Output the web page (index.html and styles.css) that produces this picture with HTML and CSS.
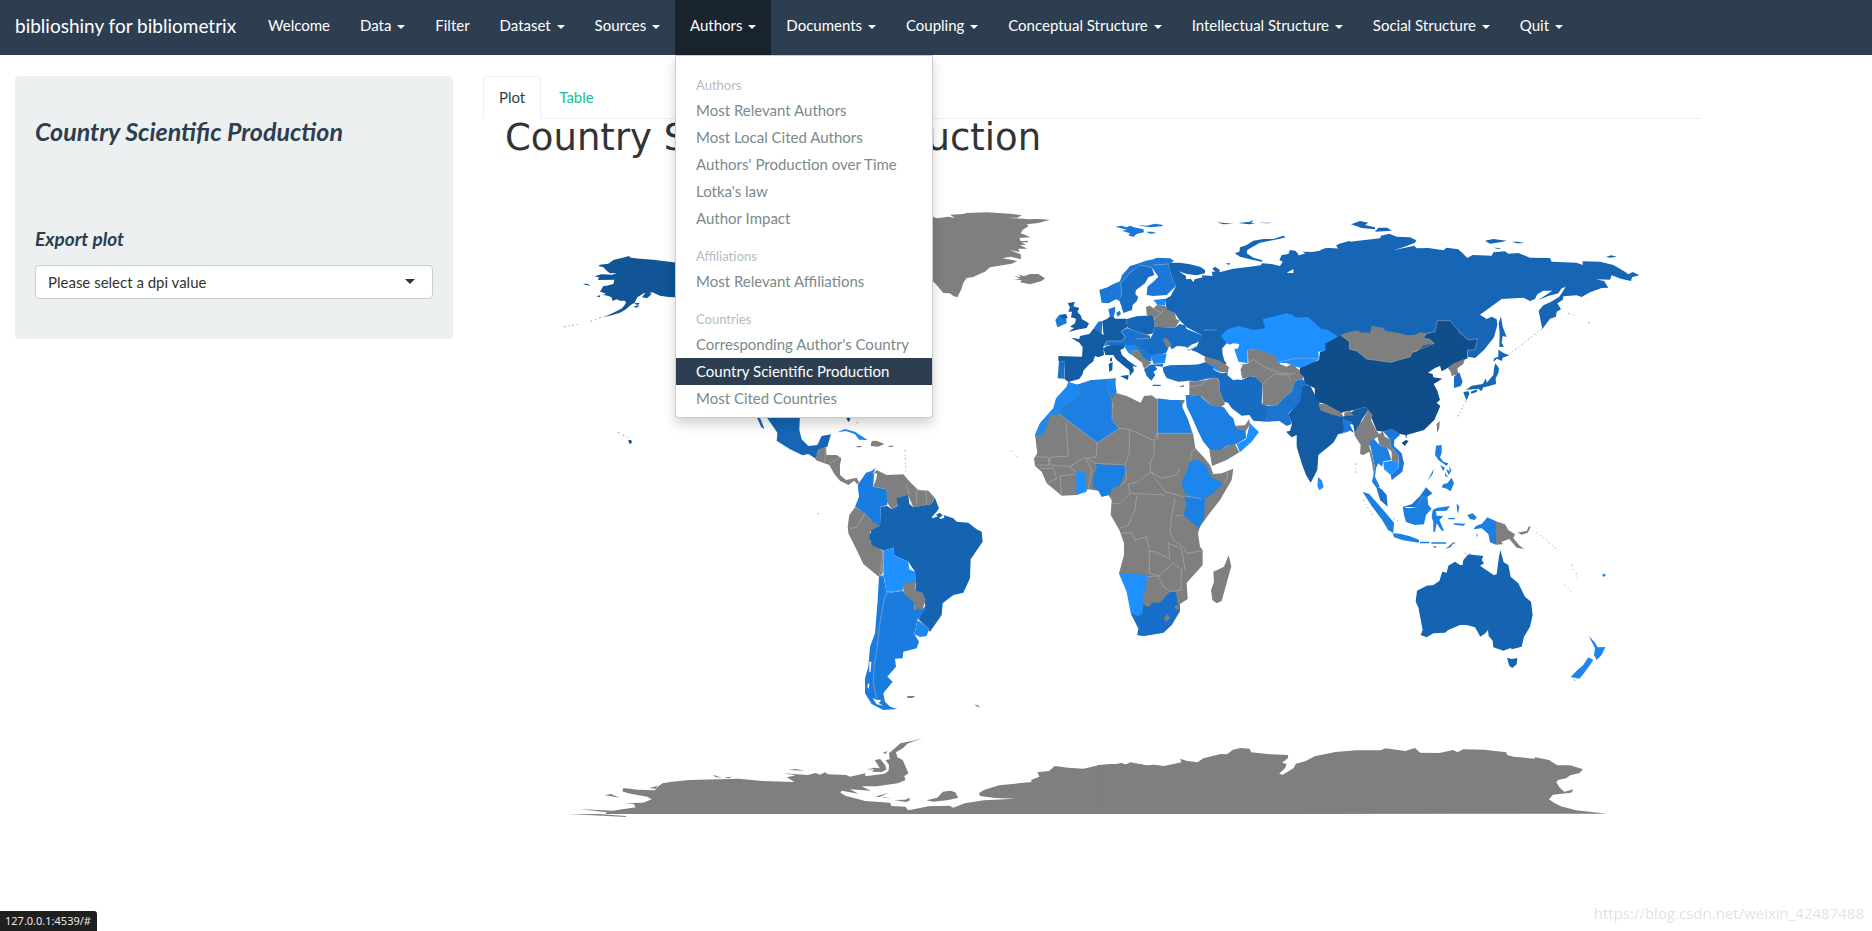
FILE: index.html
```html
<!DOCTYPE html>
<html lang="en">
<head>
<meta charset="utf-8">
<title>biblioshiny for bibliometrix</title>
<link rel="stylesheet" href="styles.css">
</head>
<body>
<nav class="navbar">
  <a class="brand" href="#">biblioshiny for bibliometrix</a>
  <ul class="nav">
    <li><a class="nav-link" href="#">Welcome</a></li>
    <li><a class="nav-link" href="#">Data <span class="caret"></span></a></li>
    <li><a class="nav-link" href="#">Filter</a></li>
    <li><a class="nav-link" href="#">Dataset <span class="caret"></span></a></li>
    <li><a class="nav-link" href="#">Sources <span class="caret"></span></a></li>
    <li class="open">
      <a class="nav-link" href="#">Authors <span class="caret"></span></a>
      <ul class="menu">
        <li class="menu-header">Authors</li>
        <li><a href="#">Most Relevant Authors</a></li>
        <li><a href="#">Most Local Cited Authors</a></li>
        <li><a href="#">Authors' Production over Time</a></li>
        <li><a href="#">Lotka's law</a></li>
        <li><a href="#">Author Impact</a></li>
        <li class="menu-header">Affiliations</li>
        <li><a href="#">Most Relevant Affiliations</a></li>
        <li class="menu-header">Countries</li>
        <li><a href="#">Corresponding Author's Country</a></li>
        <li class="active"><a href="#">Country Scientific Production</a></li>
        <li><a href="#">Most Cited Countries</a></li>
      </ul>
    </li>
    <li><a class="nav-link" href="#">Documents <span class="caret"></span></a></li>
    <li><a class="nav-link" href="#">Coupling <span class="caret"></span></a></li>
    <li><a class="nav-link" href="#">Conceptual Structure <span class="caret"></span></a></li>
    <li><a class="nav-link" href="#">Intellectual Structure <span class="caret"></span></a></li>
    <li><a class="nav-link" href="#">Social Structure <span class="caret"></span></a></li>
    <li><a class="nav-link" href="#">Quit <span class="caret"></span></a></li>
  </ul>
</nav>
<main class="layout">
  <aside class="well">
    <h3>Country Scientific Production</h3>
    <label for="dpi">Export plot</label>
    <div class="select-wrap">
      <select id="dpi"><option>Please select a dpi value</option><option>75</option><option>150</option><option>300</option><option>600</option></select>
    </div>
  </aside>
  <section class="content">
    <div class="tabs">
      <a class="tab selected" href="#">Plot</a>
      <a class="tab" href="#">Table</a>
    </div>
    <h2 class="plot-title">Country Scientific Production</h2>
    <svg class="map" viewBox="1449 510 3654 1980" role="img" aria-label="World map of scientific production">
      <!-- Antarctica -->
      <g class="none">
        <g transform="translate(1620 2100) scale(1.148 1)">
          <path d="M75,343L150,342 225,348 225,351 140,346ZM100,327L190,332 250,322 245,312 222,310 270,308 292,298 280,290 230,280 215,274 218,264 255,269 300,271 306,262 320,250 345,245 390,240 520,236 580,243 665,246 645,232 668,226 636,220 700,225 720,219 732,224 745,217 752,223 800,225 810,230 850,220 850,229 900,221 911,212 912,195 903,180 914,178 912,160 925,147 942,130 975,122 1000,114 960,131 948,145 930,157 934,172 948,180 958,207 963,220 952,228 955,240 935,250 880,259 840,259 865,272 810,268 832,281 788,272 785,278 800,288 850,303 915,308 918,318 955,320 962,331 990,325 1015,319 1070,317 1080,323 1110,310 1160,301 1243,296 1190,294 1150,288 1147,280 1160,270 1200,256 1285,246 1283,240 1305,230 1300,217 1330,213 1345,198 1380,203 1420,206 1460,196 1495,192 1572,192 1572,342 170,342 175,337Z"/>
          <path d="M170,286l15,-4 23,11zM648,210l20,-3 25,5zM452,224l24,10-18,-3zM480,232l22,-2-8,5zM875,180l14,-3 14,20 2,12-12,7-25,-1 5,-7-20,1 20,-6 15,2zM876,290l35,-12-22,12 32,6-20,-5zM925,300l30,-1 10,-6 2,8-10,5zM1010,301l28,-8 15,-18 20,-3 12,5 8,16-25,7-40,5zM896,158l12,-5-5,9zM945,110l30,-5M285,265l22,-8-5,9z"/>
        </g>
        <path transform="translate(3300 2100) scale(1.477 1)" d="M-5,195L30,193 45,188 50,195 62,187 80,192 95,196 110,194 130,198 165,187 163,176 175,182 198,187 210,175 245,162 258,163 270,149 285,144 304,146 307,157 340,162 382,165 382,174 370,188 379,192 376,204 364,221 371,224 393,205 398,191 417,184 436,169 478,156 520,151 570,151 580,145 620,153 640,144 650,158 690,159 717,150 726,157 738,148 780,149 825,157 827,165 840,170 882,176 884,172 912,180 929,196 955,196 981,208 974,219 955,226 947,235 930,240 927,247 933,262 943,275 962,268 957,278 920,284 912,298 922,308 936,319 967,331 1030,341 -5,342Z"/>
      </g>
      <!-- Alaska and Hawaii -->
      <g transform="translate(1680 630)" fill="#115596">
        <path d="M115,168L120,164 145,161 160,150 200,140 206,138 213,143 240,146 280,149 352,158 352,262 325,261 300,257 275,246 268,252 254,248 232,262 224,278 213,284 198,298 180,308 160,314 131,322 160,308 184,296 192,288 198,278 195,272 180,272 170,268 158,273 154,262 140,256 135,250 120,245 130,228 140,227 160,222 163,209 114,210 117,202 103,199 125,193 157,194 170,189 150,190 140,182 130,172Z"/>
        <path d="M69,221l12,0 12,6-16,-2zM109,259l12,-3-2,6zM128,255l20,-7 4,10zM219,290l20,-5-8,8zM222,280l18,-2-8,8zM246,262l10,-14 20,3-15,14zM205,690l8,0 3,6-4,6-5,-3z"/>
        <path class="dots" stroke="#115596" d="M12,350L55,343M92,334l22,-8M118,324l18,-6M174,667l6,3M188,675l18,9"/>
      </g>
      <!-- Greenland, Iceland, Svalbard, Novaya Zemlya -->
      <g transform="translate(2790 600)">
        <path class="none" d="M0,50L9,50 20,55 55,50 75,54 60,44 100,42 110,39 170,37 240,41 275,46 262,53 230,53 300,58 325,57 360,59 325,69 290,73 296,78 278,90 272,100 292,107 300,112 268,114 272,124 292,122 295,127 275,127 288,134 270,135 292,146 265,146 268,156 240,150 272,163 273,178 240,170 218,175 262,183 245,191 180,202 165,215 150,221 130,231 110,234 100,248 94,268 82,292 70,288 60,280 40,279 20,255 0,235ZM252,228L272,232 266,224 282,229 300,222 325,222 345,235 335,243 300,253 270,247 275,240 252,239 270,236Z"/>
        <path fill="#1b78d8" d="M556,80L575,77 590,82 600,77 612,82 640,88 642,97 620,102 610,111 595,106 600,100 575,92 592,90ZM622,74L650,77 675,71 700,75 695,79 660,82 640,79ZM648,95L668,95 680,100 660,101Z"/>
        <path fill="#1666b5" d="M914,160L928,155 930,142 950,135 970,122 1000,117 1030,117 1060,107 1067,112 1050,116 1020,122 990,128 968,140 952,150 950,160 970,173 995,180 998,186 960,178 930,170ZM860,67l50,4-30,2zM925,69l35,-4 10,-6-6,10 12,2-20,2zM985,68h50l-25,2zM887,190l14,0-4,5z"/>
      </g>
      <!-- Russia -->
      <g fill="#1666b5">
        <path transform="translate(3060 720)" d="M445,75L452,68 480,68 510,73 540,80 555,90 555,100 530,106 500,102 476,94 498,108 498,118 512,116 520,126 524,118 548,112 545,106 578,108 575,95 586,95 577,86 585,80 600,90 598,97 640,86 690,80 722,76 726,70 755,72 780,78 788,65 778,60 785,45 805,42 810,30 826,32 835,42 836,70 825,85 800,98 830,100 845,90 850,74 870,77 876,88 868,74 845,70 847,55 858,42 848,35 880,36 912,42 920,58 925,52 915,42 900,30 925,24 955,26 955,12 990,2 990,310 900,330 650,300 620,310 607,325 608,345 622,370 610,374 555,350 512,330 530,320 545,285 500,262 478,240 465,220 440,210 435,178 452,168 468,138 455,110Z"/>
        <path transform="translate(3900 600)" d="M-20,170L30,157 60,152 75,145 115,146 108,136 150,125 240,115 243,107 268,101 290,110 330,112 349,121 345,128 310,142 280,151 343,137 350,145 385,144 430,151 440,143 475,148 488,160 502,174 518,165 575,167 580,157 615,154 625,161 655,159 690,173 750,174 755,185 830,188 848,195 848,184 900,185 940,195 975,215 985,223 998,216 1018,226 996,232 993,243 965,237 935,226 930,239 888,238 912,243 925,263 905,264 870,277 845,291 830,286 790,289 788,300 772,310 783,328 770,335 768,350 750,356 727,387 716,332 730,316 752,306 778,290 797,261 785,265 775,280 745,288 715,300 757,272 730,272 712,283 705,297 690,303 670,293 605,297 540,344 560,357 575,350 590,358 592,375 582,412 552,450 525,474 503,470 503,420 400,430 120,420 0,430 -20,350Z"/>
        <path transform="translate(3900 600)" d="M603,349L608,380 620,411 608,408 605,428 612,440 598,441 599,400 596,370ZM153,73L180,63 205,68 195,75 225,82 225,88 185,84ZM225,95L235,83 262,83 275,92ZM555,122L580,117 620,122 600,127 570,131ZM635,125l20,0 18,4-22,1zM580,143l25,1-10,3zM918,171l15,-5 18,4-20,3z"/>
        <path class="dots" stroke="#1666b5" transform="translate(3900 600)" d="M725,387L628,463M805,340l20,8M865,367l10,5"/>
      </g>
      <!-- Europe and the Middle East -->
      <g transform="translate(3060 720)">
        <path fill="#1b78d8" d="M238,150L262,142 280,132 300,124 306,105 318,92 330,78 350,72 378,62 400,58 410,53 450,55 462,62 445,75 455,110 468,138 440,165 400,168 380,165 382,140 400,125 415,110 395,82 330,100 305,130 305,165 296,182 288,178 265,190 245,188Z"/>
        <path fill="#186dc4" d="M330,98L345,80 360,75 395,82 403,105 385,112 375,130 348,150 346,162 355,172 350,184 338,195 336,210 310,219 303,195 297,180 305,165 302,130Z"/>
        <path fill="#1b78d8" d="M265,208L285,200 286,212 281,230 270,230ZM289,218l10,-6 4,10-10,8zM106,240L118,224 138,222 140,250 112,262ZM222,264L235,245 247,243 245,285Z"/>
        <path fill="#1e88f2" d="M400,180L435,176 436,196 412,194Z"/>
        <path class="none" d="M378,200L390,197 400,205 412,194 436,197 442,210 465,218 468,236 479,242 466,263 402,260 404,236 380,224Z"/>
        <path fill="#135ca5" d="M143,190L165,185 160,199 178,204 172,216 182,226 186,238 207,250 200,264 178,268 145,276 162,264 150,260 165,250 168,236 153,232 156,215 145,215 150,202ZM118,228L138,222 143,234 130,236Z"/>
        <path fill="#135ba2" d="M153,293L178,297 180,288 208,282 222,264 245,282 264,288 260,305 250,320 252,345 235,352 225,348 220,362 186,352 188,322 178,308ZM247,243L262,236 270,229 281,230 285,236 318,236 322,262 303,274 316,290 306,304 262,304 250,280ZM250,325L262,318 285,312 315,314 312,325 301,330 306,345 326,363 353,382 338,378 342,392 330,408 328,390 312,378 288,358 280,345 256,345ZM300,408L326,405 324,420ZM266,372L278,366 277,390 268,396ZM270,356L276,352 276,364 270,364ZM115,348L186,350 222,362 205,376 190,392 188,402 178,417 145,426 133,416 135,365 115,362Z"/>
        <path fill="#1b6fc8" d="M117,362L135,365 132,416 113,415Z"/>
        <path fill="#1666b5" d="M318,238L350,229 395,226 404,240 402,260 400,280 370,287 340,275 322,262Z"/>
        <path fill="#1a72ce" d="M303,274L322,264 350,275 390,287 390,303 375,318 350,324 310,316 262,316 252,320 262,303 306,303 316,290Z"/>
        <path fill="#186dc4" d="M402,260L466,263 478,252 495,256 500,267 545,285 540,303 518,314 530,320 505,332 498,320 475,318 455,328 440,300 410,300 388,300 400,280ZM355,324L388,300 430,298 445,325 438,340 395,347 370,330Z"/>
        <path fill="#1e88f2" d="M392,344L440,341 434,370 400,372ZM312,318L345,315 362,330 332,333 346,352 325,338Z"/>
        <path fill="#1b78d8" d="M350,321L372,327 394,346 395,364 378,362 360,342Z"/>
        <path class="none" d="M428,296L440,294 455,314 442,326ZM332,332L358,330 368,350 395,368 372,386 366,368 342,350Z"/>
        <path fill="#186dc4" d="M372,388L390,374 430,372 428,380 405,378 412,388 400,395 406,405 394,422 380,408ZM398,434h24v4h-24zM428,382L450,376 500,374 535,373 555,366 578,375 580,388 592,396 595,415 560,416 530,424 508,422 475,425 440,414 430,395Z"/>
        <path class="none" d="M542,345L600,362 615,372 627,382 624,398 600,396 580,380 560,370ZM508,424L530,424 590,414 600,430 598,450 615,492 600,504 575,497 545,470 525,467 508,465ZM477,440l16,-6-3,8z"/>
        <path fill="#1e90ff" d="M574,375L588,376 598,395 582,387Z"/>
        <path fill="#186dc2" d="M582,392L605,400 625,398 640,416 665,420 690,408 715,412 728,432 725,490 742,498 740,545 700,542 688,525 665,527 635,505 624,488 612,485 598,450 600,430Z"/>
        <path class="none" d="M683,330L710,326 770,346 780,372 800,380 825,365 830,385 852,396 848,418 825,422 815,455 790,475 770,498 728,496 728,432 700,408 665,416 660,375 685,370Z"/>
        <path fill="#1e90ff" d="M603,288L622,268 655,258 700,270 735,265 728,238 800,219 820,226 825,232 865,232 905,268 920,268 955,290 935,307 915,310 915,332 895,335 897,357 870,375 850,387 800,370 775,368 765,348 710,327 683,330 683,370 655,365 640,318 620,310Z"/>
        <path class="sea" d="M607,325L640,310 658,312 655,325 640,328 638,345 655,360 652,372 668,376 660,390 667,415 640,421 622,405 628,382 612,360ZM440,362L448,335 470,318 488,328 500,340 512,330 530,336 555,350 552,368 530,373 500,374 470,368 448,373ZM497,327l20,-14 13,-3-4,10-18,9z"/>
        <path fill="#1b74d0" d="M740,498L770,498 790,475 815,455 825,422 848,418 865,436 845,448 850,465 840,490 805,520 815,552 800,558 778,543 740,545Z"/>
        <path class="border" d="M305,165L302,130 330,98 360,75 395,82M400,75L445,72M322,264L350,275 390,287M303,274L316,290 306,303 262,303M350,297L388,295M400,205L425,220M402,236L430,212M508,440L545,435 560,416M683,330L683,370 700,358 728,378 750,388 785,400 800,398M728,432L765,400 785,405 825,400M800,398L812,422M774,366L830,355 897,355M182,465L178,440M590,270L550,270"/>
      </g>
      <!-- Arabian peninsula and Africa -->
      <g transform="translate(3060 1200)">
        <path class="none" d="M145,-54L170,-46 215,-60 285,-65 290,-20 320,-12 340,-2 362,8 372,-12 395,-14 410,-3 450,0 495,0 485,20 505,60 520,105 526,145 550,170 570,195 580,222 605,220 640,206 635,240 600,300 565,345 540,380 534,400 540,440 548,450 548,495 530,515 500,548 503,597 480,612 480,635 455,675 430,698 370,708 352,705 355,685 335,645 325,585 297,520 312,465 312,430 298,390 272,345 275,300 265,285 245,290 235,272 205,268 170,285 125,287 80,250 65,215 45,198 42,175 52,160 45,105 60,70 100,25 110,-5 140,-40ZM626,465L634,500 628,520 605,603 590,610 577,600 573,570 582,545 580,515 612,500Z"/>
        <path class="none" d="M568,150L605,150 618,138 645,132 658,157 620,180 576,198Z"/>
        <path fill="#1c80e3" d="M497,-15L508,-15 540,-12 575,17 612,22 628,45 640,55 645,75 655,87 677,90 678,115 650,132 618,138 605,150 570,150 548,122 535,95 515,50 500,20Z"/>
        <path class="none" d="M648,77L675,76 687,58 691,72 678,92 655,88Z"/>
        <path fill="#1e90ff" d="M690,70L698,78 717,96 695,125 660,157 650,133 678,118Z"/>
        <path fill="#1e88f2" d="M145,-54L178,-44 182,-15 150,8 120,20 115,43 90,45 70,105 45,105 60,70 100,25 108,-5 140,-40Z"/>
        <path fill="#1c80e3" d="M162,-42L215,-60 262,-60 262,-30 275,5 278,62 298,85 232,128 118,42 120,22 150,8 182,-15 178,-44ZM413,-5L450,0 480,0 490,28 503,58 515,100 413,100Z"/>
        <path fill="#1c85ee" d="M262,-60L288,-65 284,-42 290,-25 276,-5 262,-30Z"/>
        <path fill="#1c80e3" d="M228,188L250,195 308,194 320,205 300,258 280,262 268,285 245,290 235,272 218,262 220,230 230,205ZM492,290L510,290 555,292 553,350 537,385 490,345 500,315Z"/>
        <path fill="#1e90ff" d="M168,217L195,216 200,275 170,285ZM297,520L378,524 412,527 380,532 378,570 369,575 368,640 355,648 332,640 320,575Z"/>
        <path fill="#1c85ee" d="M484,245L500,215 510,183 535,180 562,200 568,222 580,235 610,250 580,280 545,300 520,294 495,280Z"/>
        <path fill="#186fca" d="M332,640L355,648 368,640 369,612 385,622 398,608 420,608 450,575 468,575 473,612 480,628 455,675 430,698 370,708 352,705 355,685Z"/>
        <path class="none" d="M431,655L443,643 451,654 440,665ZM463,620l8,-6 6,12-8,3z"/>
        <path class="border" d="M118,42L232,128 298,85 328,88 403,122 411,98M413,-5V120M138,65L145,168 90,172 88,195M278,5L276,62 298,85M328,88L328,160 315,195M232,128L228,170 200,175 228,190 310,194M403,122L402,165 390,190 392,215 355,245 325,252M315,195L320,240 300,260M392,215L425,235 470,225 480,205M411,100H515M530,145L515,155 510,183M392,215L435,275 490,290M325,252L330,280 300,310 275,312M330,280L435,285M350,285L345,330 325,375 300,385M302,400L335,398 345,420 380,410 388,455 388,520M465,295L455,350 450,395 460,420 490,440M388,455L405,455 450,478 445,430 485,445M490,440L500,460 548,452M388,520L415,528 460,490 485,510 482,570 450,575M380,530L415,528 430,560 450,575M485,445L495,510M45,170L85,172 88,195 50,195M90,195L150,200 165,190 195,172 215,210 205,265M125,287L120,228 165,222M60,205L100,205 110,235 80,250M150,200L168,217M622,215L622,235 610,250M497,290L512,290 545,297M490,345L465,348"/>
      </g>
      <!-- China, Mongolia, Korea, Japan -->
      <g transform="translate(3900 600)">
        <path fill="#104e8b" d="M122,405L150,420 272,470 370,405 405,395 412,362 450,362 470,385 475,400 505,420 533,416 525,450 503,450 503,475 460,495 425,514 420,498 405,504 384,518 398,522 400,532 427,536 401,552 412,572 420,600 410,608 421,618 403,660 372,690 320,705 320,716 315,705 290,700 275,688 250,695 230,692 215,655 205,630 195,620 165,630 130,636 125,640 75,612 50,605 45,590 44,565 15,550 10,530 0,520 0,505 57,480 60,455 75,452 78,430 105,415Z"/>
        <path class="none" d="M122,405L150,395 175,391 180,397 210,398 215,378 250,383 255,392 300,400 320,406 345,404 360,397 380,400 370,415 388,418 403,430 370,437 350,455 335,458 332,470 272,487 200,477 170,453 148,447 148,425ZM443,503L462,490 495,476 490,492 472,505 475,523 455,528 452,515ZM410,672L419,663 418,685 411,698Z"/>
        <path fill="#1b6cc4" d="M462,530L478,517 488,545 482,558 462,564Z"/>
        <path fill="#1666b5" d="M595,449L612,460 628,466 608,473 606,483 590,476 580,486 582,475 595,470ZM586,490L597,505 595,520 587,535 588,552 560,560 550,562 544,574 535,566 498,570 515,557 548,552 558,535 560,548 580,525 582,505ZM490,576L506,574 508,582 500,601 495,590ZM512,575L532,568 530,576 514,581Z"/>
        <path class="dots" stroke="#1666b5" d="M498,602L473,652"/>
        <path class="border" d="M122,405L148,425 148,447 170,453 200,477 272,487 332,470 335,458 403,430 388,418 370,415 380,400 405,395 412,362 450,362 470,385 505,420 533,416 525,450 503,450 503,475"/>
      </g>
      <!-- South and Southeast Asia, Oceania -->
      <g transform="translate(3900 1200)">
        <path fill="#135ca3" d="M5,-40L30,-45 45,-15 60,12 125,42 130,50 165,30 195,20 205,30 185,60 175,85 165,105 160,75 140,65 130,100 115,102 100,128 55,165 52,210 32,248 18,225 5,190 -10,140 -10,105 -25,112 -42,95 -30,92 -24,72 -35,42 0,5 5,-20Z"/>
        <path class="none" d="M55,12L75,12 125,38 125,52 90,42 60,30ZM133,38L150,32 160,47 132,47ZM205,30L218,45 213,60 228,90 240,105 212,125 208,140 215,160 225,205 222,228 216,190 208,155 190,165 180,162 182,135 163,105 170,85 188,60ZM232,108L248,94 255,110 270,118 272,137 297,168 295,184 275,182 275,155 262,143 238,135Z"/>
        <path fill="#1b78d8" d="M126,50L135,60 160,65 150,75 162,98 150,92 133,99ZM250,95L275,87 292,95 300,105 283,120 282,138 305,160 312,190 307,215 275,241 272,225 295,205 297,168 272,137 270,118Z"/>
        <path fill="#1c80e3" d="M208,125L222,117 238,135 262,143 274,180 250,184 246,200 235,190 228,205 225,230 240,262 228,262 216,245 225,205 215,155Z"/>
        <path fill="#1e90ff" d="M250,186L275,182 295,184 295,205 272,225 252,208ZM54,230L66,242 71,262 58,271 52,258Z"/>
        <path fill="#1b74d0" d="M228,258L245,268 260,285 263,320 240,300ZM308,320L335,313 360,288 378,262 397,280 382,291 365,290 350,322Z"/>
        <path fill="#104e8b" d="M305,128L318,120 326,123 314,138Z"/>
        <path fill="#1c80e3" d="M188,276L207,281 250,330 282,368 280,399 265,391 245,358 215,318ZM278,400L300,401 330,409 358,420 356,428 310,421 282,412ZM360,425h28v5h-28zM394,427h44v4h-44zM435,446l25,-16-8,12zM398,437l14,4-8,3zM308,320L325,325 350,322 365,290 382,291 385,315 395,326 378,345 372,373 345,375 318,366 312,345ZM398,330L410,324 450,318 440,332 408,333 410,347 430,348 418,360 432,392 425,392 410,370 405,396 400,395 400,365 395,352ZM470,310l8,10-4,22-3,-15zM502,345L518,340 530,352 524,360 510,357ZM535,375L545,372 562,352 588,364 588,434 570,427 565,402 545,385 520,388 528,378ZM445,354h20v4h-20zM460,370l38,1-8,6-25,-2zM530,398l4,10-4,2zM408,137L425,135 425,160 420,172 430,185 445,190 440,198 415,180 405,165ZM420,195l15,8-5,10zM438,207l14,8-6,10zM435,218l10,14-10,-4zM447,198l8,14-5,4zM425,262L430,252 442,250 455,233 462,250 452,274 440,266ZM382,243L402,205 398,222Z"/>
        <path class="none" d="M588,364L615,373 625,390 645,403 640,414 657,435 672,447 650,443 628,417 605,425 608,433 588,434ZM653,398L680,393 687,378 692,382 683,398 665,404ZM446,437l14,-10 8,2z"/>
        <path fill="#1564b2" d="M351,572L380,557 400,555 418,543 427,515 440,518 445,497 465,485 480,495 488,495 490,480 505,463 550,468 545,480 552,490 540,497 562,512 582,526 590,522 597,470 601,450 611,487 625,495 632,530 655,550 675,590 693,605 698,645 690,680 672,710 665,740 635,748 632,744 610,752 580,742 578,722 566,708 564,690 556,700 541,710 525,682 500,675 480,675 445,690 435,698 400,700 380,712 362,705 368,690 355,622 347,605ZM621,773L636,777 652,774 650,793 637,804 628,798Z"/>
        <path fill="#1c85ee" d="M866,707L885,728 893,742 916,741 905,765 890,780 882,765 885,745ZM865,772L880,780 868,798 850,822 838,836 812,831 830,812 850,795ZM906,524l8,-3 4,5-8,5zM918,514l12,-4M820,838l6,2-3,3z"/>
        <path class="dots" stroke="#7f7f7f" d="M709,396L772,450M793,554L814,575M815,494l5,18M828,518l6,22"/>
        <path class="dots" stroke="#1c80e3" d="M190,300L222,352M168,190l-2,28M280,355l20,12M494,460l24,0"/>
      </g>
      <!-- The Americas -->
      <g transform="translate(2220 1200)">
        <path fill="#1666b5" d="M45,40L58,48 73,86 64,82ZM72,40L180,40 178,90 185,118 205,138 232,135 245,108 273,103 262,140 235,150 228,176 205,162 188,166 150,148 110,122 112,98Z"/>
        <path fill="#115596" d="M316,48L331,48 330,60 325,66Z"/>
        <path class="none" d="M237,147L258,142 260,165 290,165 304,175 300,195 300,225 318,240 350,233 358,248 350,252 343,242 325,255 300,242 283,222 268,195 226,180ZM395,123L410,122 433,132 415,140 392,138ZM350,138h14v4h-14zM446,137h13v4h-13zM502,888h24l-8,6h-16zM702,914l18,9-6,-8z"/>
        <path fill="#1e88f2" d="M292,97L315,87 345,95 383,120 357,119 345,103 318,93Z"/>
        <path class="none" d="M395,225L410,210 440,225 490,223 512,248 535,270 565,272 583,292 575,312 520,322 505,287 475,295 470,318 455,328 440,305 440,268 402,260ZM345,322L375,338 395,362 418,365 420,380 390,395 390,425 430,455 428,520 418,532 370,492 350,450 325,400 323,380 328,345Z"/>
        <path fill="#1b7ce0" d="M408,203L398,222 400,260 440,268 442,315 422,320 420,378 395,362 375,340 345,320 357,290 353,255 378,218 395,213ZM417,530L430,525 440,580 487,572 525,608 522,628 550,625 560,615 563,630 533,658 523,702 537,725 530,745 490,755 488,775 465,776 468,800 442,830 458,845 430,880 435,905 450,920 472,927 430,930 395,912 375,880 375,835 385,800 390,740 405,700 413,600Z"/>
        <path fill="#1564b2" d="M422,320L442,318 455,328 472,318 470,295 505,285 508,312 520,322 575,312 584,292 597,325 580,350 610,345 640,355 650,365 685,368 710,388 725,395 728,425 692,478 690,535 670,578 640,585 608,610 605,645 570,695 535,657 557,628 553,595 528,572 525,515 505,485 462,465 460,443 430,452 395,435 387,410 395,390 420,378Z"/>
        <path fill="#1e90ff" d="M430,452L460,443 462,465 505,485 508,508 525,515 528,548 495,550 487,572 440,580 430,520Z"/>
        <path class="none" d="M490,550L525,545 528,572 548,578 557,600 548,628 522,628 525,610 490,580Z"/>
        <path fill="#1e88f2" d="M533,660L567,687 560,708 540,711 523,703Z"/>
        <path class="sea" d="M575,352l15,-17 8,10 12,-4 3,12-12,4-8,-8-14,6z"/>
        <path fill="#1564b2" d="M588,344l12,-6 8,8-10,8z"/>
        <path class="sea" d="M400,258l3,-40 8,3-2,16zM388,785l6,0-2,30 -4,2zM384,850l4,2-2,14-4,-4zM398,895l12,4 14,2-8,8 14,8-20,-4z"/>
        <path class="border" d="M440,580L432,600 418,680 412,740 402,800 400,850 410,895M430,455L418,530M375,340L350,382 330,385M530,265L530,310M558,272L560,310M300,172L270,190M258,142L255,185M490,572L440,575M498,250L508,290M535,658L567,687"/>
        <path class="dots" stroke="#7f7f7f" d="M495,150L498,222M232,341l12,2M351,65l2,10M812,152l20,20"/>
      </g>
    </svg>
  </section>
</main>
<div class="status">127.0.0.1:4539/#</div>
<div class="watermark">https://blog.csdn.net/weixin_42487488</div>
</body>
</html>
```

FILE: styles.css
```css
* { box-sizing: border-box; }

body {
  margin: 0;
  min-height: 100vh;
  background: #fff;
  color: #2c3e50;
  font: 15px/21px Lato, "Open Sans", sans-serif;
}

a { text-decoration: none; }
ul { margin: 0; padding: 0; list-style: none; }

.navbar {
  display: flex;
  gap: 2px;
  background: #2c3e50;
}

.brand {
  padding: 15px 15px 19px;
  color: #fff;
  font-size: 19px;
}

.nav { display: flex; }
.nav > li { position: relative; }

.nav-link {
  display: block;
  padding: 15px 15px 19px;
  color: #fff;
}

.open > .nav-link { background: #1a242f; }

.caret {
  display: inline-block;
  margin-left: 2px;
  vertical-align: middle;
  border-top: 4px solid;
  border-left: 4px solid transparent;
  border-right: 4px solid transparent;
}

.menu {
  position: absolute;
  top: 100%;
  left: 0;
  z-index: 10;
  min-width: 258px;
  padding: 5px 0;
  background: #fff;
  border: 1px solid #ccc;
  border-radius: 0 0 4px 4px;
  box-shadow: 0 6px 12px rgba(0, 0, 0, .18);
  white-space: nowrap;
}

.menu a {
  display: block;
  padding: 3px 20px;
  color: #7b8a8b;
}

.menu .active a { background: #2c3e50; color: #fff; }

.menu-header {
  margin-top: 12px;
  padding: 3px 20px;
  color: #b4bcc2;
  font-size: 13px;
  line-height: 18px;
}

.layout {
  display: grid;
  grid-template-columns: 3fr 8fr 1fr;
  padding-top: 21px;
}

.well {
  align-self: start;
  margin: 0 15px;
  padding: 20px 20px 40px;
  background: #ecf0f1;
  border-radius: 4px;
}

.well h3 {
  margin: 21px 0 82px;
  font: italic 700 25px/29px Lato, sans-serif;
}

.well label {
  display: block;
  margin-bottom: 16px;
  font: italic 700 19px/21px Lato, sans-serif;
}

.select-wrap { position: relative; }

.select-wrap::after {
  content: "";
  position: absolute;
  top: 14px;
  right: 18px;
  border-top: 5px solid #333;
  border-left: 5px solid transparent;
  border-right: 5px solid transparent;
  pointer-events: none;
}

.select-wrap select {
  display: block;
  width: 100%;
  height: 34px;
  padding: 0 12px;
  appearance: none;
  background: #fff;
  border: 1px solid #ccc;
  border-radius: 4px;
  color: #333;
  font: 15px/21px Lato, sans-serif;
}

.content { padding: 0 15px; }

.tabs {
  display: flex;
  border-bottom: 1px solid #ecf0f1;
}

.tab {
  margin: 0 2px -1px 0;
  padding: 10px 15px;
  border: 1px solid transparent;
  border-radius: 4px 4px 0 0;
  color: #18bc9c;
}

.tab.selected {
  background: #fff;
  border-color: #ecf0f1 #ecf0f1 #fff;
  color: #2c3e50;
}

.plot-title {
  margin: 0 0 13px 22px;
  color: #333;
  font: 400 37px/38px "DejaVu Sans", sans-serif;
}

.map { display: block; width: 100%; }
.none { fill: #7f7f7f; }
.sea { fill: #fff; }
.border { fill: none; stroke: #bebebe; stroke-opacity: .7; stroke-width: 2; }
.dots { fill: none; stroke-width: 3; stroke-opacity: .6; stroke-dasharray: 5 9 3 7; }

.status {
  position: fixed;
  left: 0;
  bottom: 0;
  padding: 0 6px 0 5px;
  background: #1f1f1f;
  border-top-right-radius: 3px;
  color: #e8e8e8;
  font: 12px/20px "Noto Sans", sans-serif;
  font-size: 11px;
}

.watermark {
  position: fixed;
  right: 8px;
  bottom: 7px;
  color: #e2e2e2;
  font: 15px/22px "Open Sans", sans-serif;
}
```
